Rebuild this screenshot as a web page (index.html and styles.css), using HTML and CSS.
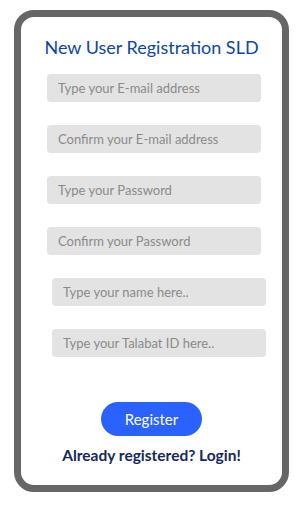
FILE: index.html
```html
<!DOCTYPE html>
<html lang="en">
<head>
    <meta charset="UTF-8">
    <meta name="viewport" content="width=device-width, initial-scale=1.0">
    <title>New User Registration SLD</title>
    <link rel="stylesheet" href="styles.css">
</head>
<body>
    <div class="phone">
        <h1 class="title">New User Registration SLD</h1>
        <form class="form" onsubmit="return false">
            <div class="fields">
                <input class="field" type="email" placeholder="Type your E-mail address">
                <input class="field" type="email" placeholder="Confirm your E-mail address">
                <input class="field" type="password" placeholder="Type your Password">
                <input class="field" type="password" placeholder="Confirm your Password">
            </div>
            <div class="fields shifted">
                <input class="field" type="text" placeholder="Type your name here..">
                <input class="field" type="text" placeholder="Type your Talabat ID here..">
            </div>
            <button class="register" type="submit">Register</button>
        </form>
        <a class="login" href="#">Already registered? Login!</a>
    </div>
</body>
</html>
```

FILE: styles.css
```css
* {
    box-sizing: border-box;
}
body {
    margin: 0;
    background-color: #fff;
    font-family: Lato, "Open Sans", sans-serif;
}
.phone {
    width: 275px;
    height: 482px;
    margin: 10px 0 0 14px;
    border: 7px solid #666;
    border-radius: 20px;
    display: flex;
    flex-direction: column;
    align-items: center;
}
.title {
    margin: 19px 0 0;
    font-size: 18px;
    line-height: 22px;
    font-weight: normal;
    color: #0d47a1;
}
.form {
    align-self: stretch;
    display: flex;
    flex-direction: column;
    margin-top: 16px;
}
.fields {
    display: flex;
    flex-direction: column;
    gap: 23px;
    padding-left: 26px;
}
.fields.shifted {
    margin-top: 23px;
    padding-left: 31px;
}
.field {
    width: 214px;
    height: 28px;
    border: none;
    border-radius: 4px;
    background-color: #e3e3e3;
    padding: 0 11px;
    font-family: inherit;
    font-size: 13px;
    color: #333;
    outline: none;
}
.field::placeholder {
    color: #8a8a8a;
}
.register {
    align-self: center;
    margin-top: 45px;
    width: 101px;
    height: 34px;
    border: none;
    border-radius: 17px;
    background-color: #2962ff;
    color: #fff;
    font-family: inherit;
    font-size: 15px;
    cursor: pointer;
}
.login {
    margin-top: 10px;
    font-size: 15.5px;
    line-height: 19px;
    font-weight: bold;
    color: #14295a;
    text-decoration: none;
}
```
